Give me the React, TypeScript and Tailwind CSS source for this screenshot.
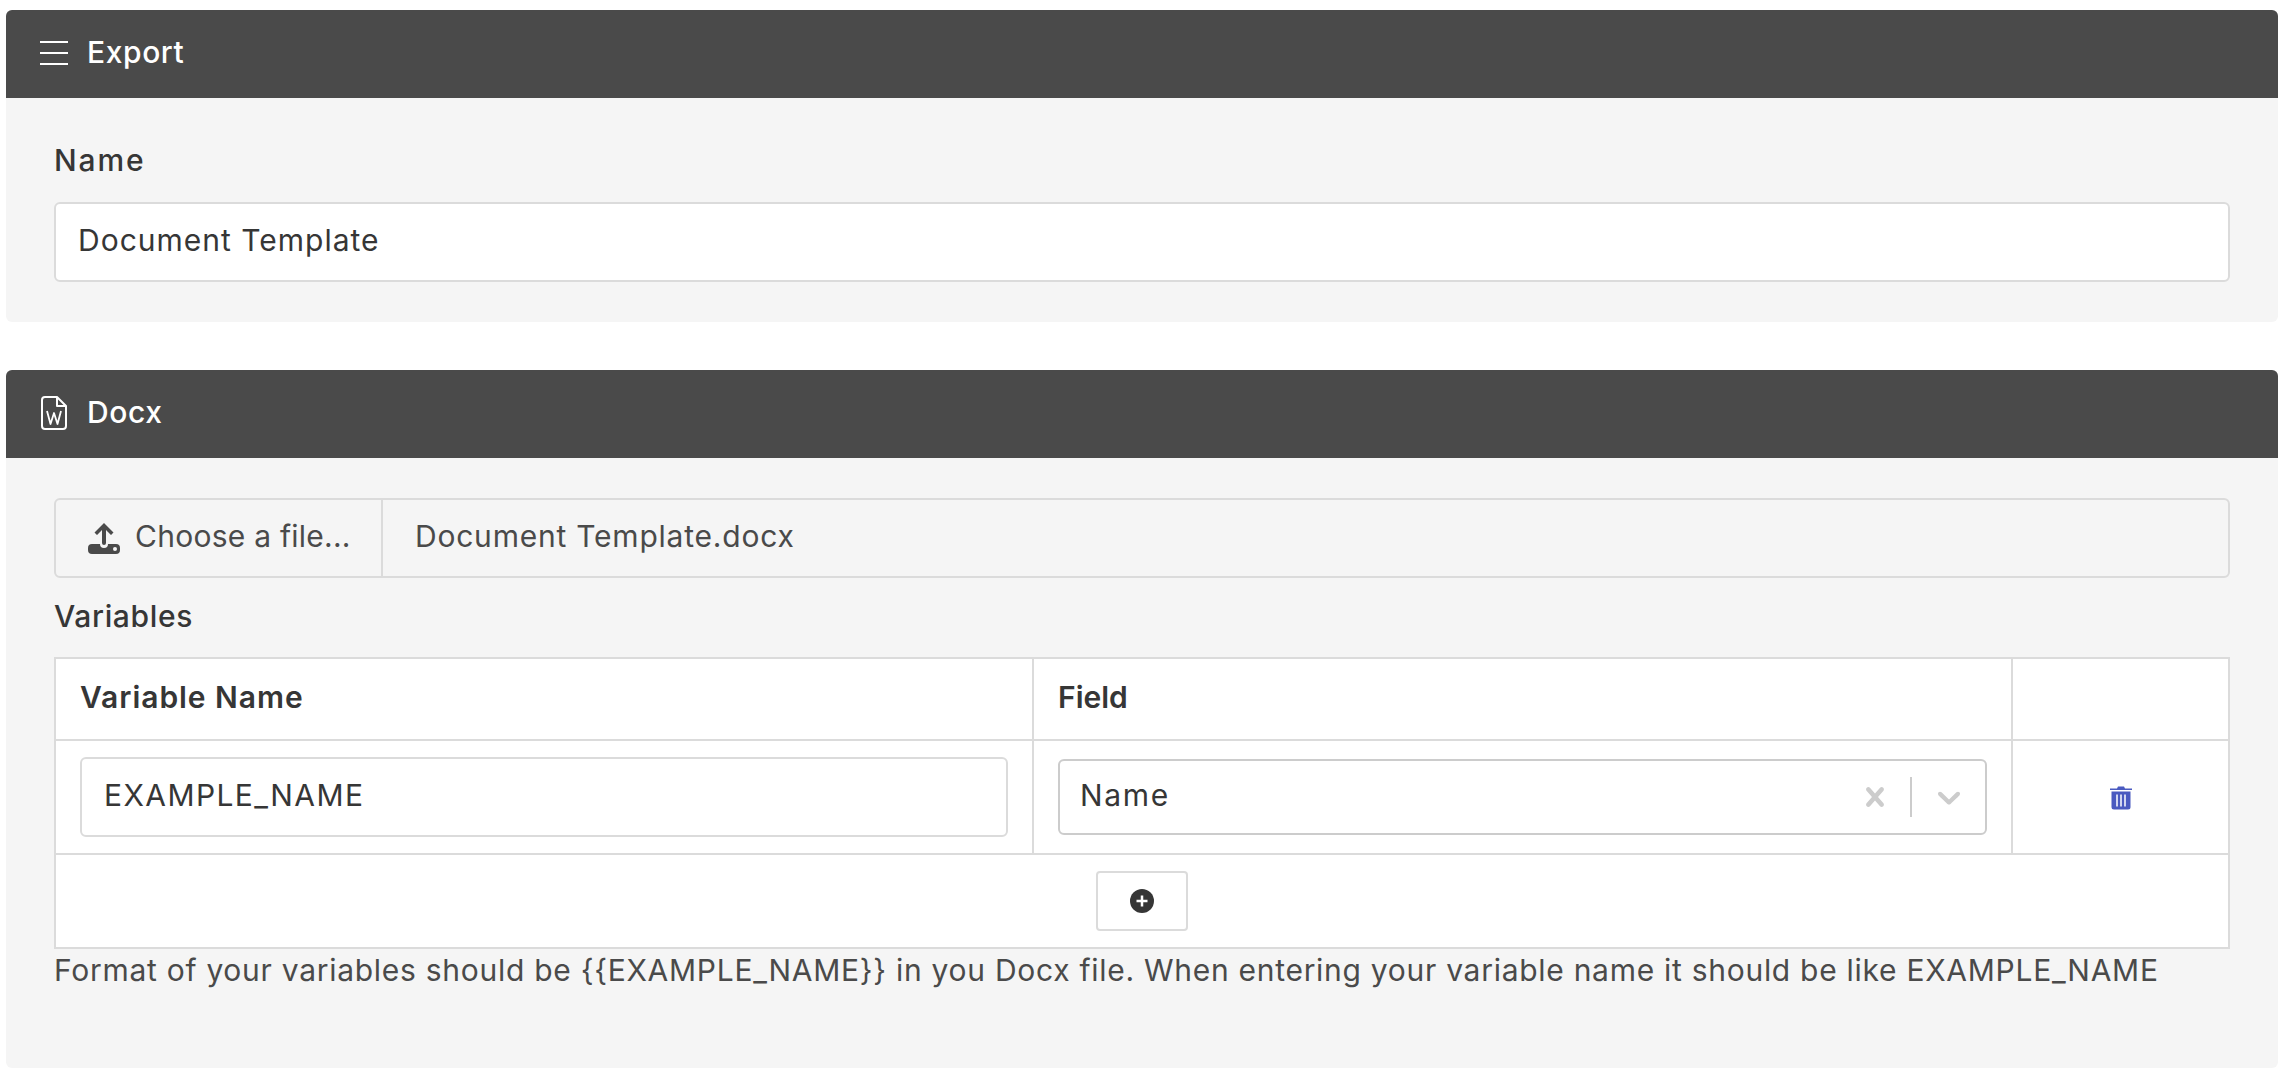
const font = "font-['Inter','Liberation_Sans',sans-serif]";

function MenuIcon() {
  return (
    <svg width="28" height="24" viewBox="0 0 28 24" className="shrink-0">
      <path d="M0 1h28M0 12h28M0 23h28" stroke="#fff" strokeWidth="2" fill="none" />
    </svg>
  );
}

function WordFileIcon() {
  return (
    <svg width="26" height="34" viewBox="0 0 26 34" fill="none" stroke="#fff" strokeWidth="2" className="shrink-0">
      <path d="M4 1h12l9 9v20a3 3 0 0 1-3 3H4a3 3 0 0 1-3-3V4a3 3 0 0 1 3-3z" strokeLinejoin="round" />
      <path d="M16 1v9h9" strokeLinejoin="round" />
      <path d="M6 15l3.500 13L13 17l3.500 11L20 15" strokeWidth="1.800" strokeLinejoin="round" />
    </svg>
  );
}

function UploadIcon() {
  return (
    <svg width="32" height="32" viewBox="0 0 32 32" className="shrink-0" fill="#4a4a4a">
      <path d="M16 1L6.500 10.500 9 13l5-5v13a2 2 0 0 0 4 0V8l5 5 2.500-2.500z" />
      <path d="M4 22h8a4 4 0 0 0 8 0h8a4 4 0 0 1 4 4v2a4 4 0 0 1-4 4H4a4 4 0 0 1-4-4v-2a4 4 0 0 1 4-4z" />
      <circle cx="27" cy="27" r="2" fill="#f5f5f5" />
    </svg>
  );
}

function TrashIcon() {
  return (
    <svg width="22" height="25" viewBox="0 0 22 25" fill="#4a5ac0">
      <path d="M0 5V3.500h7L8 1.500h6l1 2h7V5z" />
      <path d="M1.500 6.500h19V22a2.500 2.500 0 0 1-2.500 2.500H4A2.500 2.500 0 0 1 1.500 22z" />
      <path d="M7 9.500v12M11 9.500v12M15 9.500v12" stroke="#fff" strokeWidth="1.500" />
    </svg>
  );
}

function PlusCircleIcon() {
  return (
    <svg width="24" height="24" viewBox="0 0 24 24">
      <circle cx="12" cy="12" r="12" fill="#363636" />
      <path d="M12 6.500v11M6.500 12h11" stroke="#fff" strokeWidth="2.500" />
    </svg>
  );
}

function ClearIcon() {
  return (
    <svg width="38" height="38" viewBox="0 0 20 20" fill="#cccccc" className="shrink-0">
      <path d="M14.348 14.849c-0.469 0.469-1.229 0.469-1.697 0l-2.651-3.030-2.651 3.029c-0.469 0.469-1.229 0.469-1.697 0-0.469-0.469-0.469-1.229 0-1.697l2.758-3.150-2.759-3.152c-0.469-0.469-0.469-1.228 0-1.697s1.228-0.469 1.697 0l2.652 3.031 2.651-3.031c0.469-0.469 1.228-0.469 1.697 0s0.469 1.229 0 1.697l-2.758 3.152 2.758 3.150c0.469 0.469 0.469 1.229 0 1.698z" />
    </svg>
  );
}

function DropdownIcon() {
  return (
    <svg width="38" height="38" viewBox="0 0 20 20" fill="#cccccc" className="shrink-0">
      <path d="M4.516 7.548c0.436-0.446 1.043-0.481 1.576 0l3.908 3.747 3.908-3.747c0.533-0.481 1.141-0.446 1.574 0 0.436 0.445 0.408 1.197 0 1.615-0.406 0.418-4.695 4.502-4.695 4.502-0.217 0.223-0.502 0.335-0.787 0.335s-0.570-0.112-0.789-0.335c0 0-4.287-4.084-4.695-4.502s-0.436-1.170 0-1.615z" />
    </svg>
  );
}

function Card({ title, icon, children }: { title: string; icon: React.ReactNode; children: React.ReactNode }) {
  return (
    <section className="rounded-[6px] overflow-hidden bg-[#f5f5f5]">
      <header className="h-[88px] bg-[#4a4a4a] flex items-center pl-[34px] gap-[19px] text-white text-[30px] font-medium tracking-[0.6px] pb-[3px]">
        <span className="w-[28px] flex justify-center">{icon}</span>
        <span>{title}</span>
      </header>
      {children}
    </section>
  );
}

export default function App() {
  return (
    <div className={`${font} min-h-[1078px] bg-white pt-[10px] pl-[6px] pr-[8px] text-[#363636]`}>
      <Card title="Export" icon={<MenuIcon />}>
        <div className="px-[48px] pt-[42px] pb-[40px]">
          <label className="block text-[30px] font-medium leading-[40px] tracking-[1.9px] mb-[22px]">Name</label>
          <div className="h-[80px] bg-white border-2 border-[#dbdbdb] rounded-[6px] flex items-center px-[22px] pb-[3px] text-[30px] tracking-[1px]">
            Document Template
          </div>
        </div>
      </Card>

      <div className="mt-[48px]">
        <Card title="Docx" icon={<WordFileIcon />}>
          <div className="px-[48px] pt-[40px] h-[610px]">
            <div className="h-[80px] border-2 border-[#dbdbdb] rounded-[6px] flex items-center text-[30px] text-[#4a4a4a]">
              <div className="w-[327px] h-full flex items-center gap-[15px] pl-[32px] border-r-2 border-[#dbdbdb]">
                <UploadIcon />
                <span className="tracking-[0.25px] mb-[4px]">Choose a file...</span>
              </div>
              <div className="pl-[32px] mb-[4px] tracking-[0.78px]">Document Template.docx</div>
            </div>

            <div className="text-[30px] font-medium leading-[40px] tracking-[0.65px] mt-[18px] mb-[21px]">Variables</div>

            <table className="w-full table-fixed border-collapse bg-white text-[30px]">
              <colgroup>
                <col className="w-[978px]" />
                <col className="w-[979px]" />
                <col />
              </colgroup>
              <thead>
                <tr className="h-[82px]">
                  <th className="border-2 border-[#dbdbdb] text-left font-semibold text-[30px] tracking-[0.95px] pl-[24px] pb-[3px]">Variable Name</th>
                  <th className="border-2 border-[#dbdbdb] text-left font-semibold text-[30px] pl-[24px] pb-[3px]">Field</th>
                  <th className="border-2 border-[#dbdbdb]" />
                </tr>
              </thead>
              <tbody>
                <tr className="h-[114px]">
                  <td className="border-2 border-[#dbdbdb] px-[24px]">
                    <div className="h-[80px] border-2 border-[#dbdbdb] rounded-[6px] flex items-center px-[22px] pb-[3px] tracking-[1.4px]">
                      EXAMPLE_NAME
                    </div>
                  </td>
                  <td className="border-2 border-[#dbdbdb] px-[24px]">
                    <div className="h-[76px] border-2 border-[#cccccc] rounded-[6px] flex items-center pl-[20px] pr-[17px]">
                      <span className="flex-1 mb-[3px] tracking-[1.7px]">Name</span>
                      <ClearIcon />
                      <span className="w-[2px] h-[40px] bg-[#cccccc] ml-[16px] mr-[18px]" />
                      <DropdownIcon />
                    </div>
                  </td>
                  <td className="border-2 border-[#dbdbdb]">
                    <div className="flex justify-center items-center">
                      <TrashIcon />
                    </div>
                  </td>
                </tr>
                <tr className="h-[94px]">
                  <td colSpan={3} className="border-2 border-[#dbdbdb]">
                    <div className="flex justify-center">
                      <button className="w-[92px] h-[60px] border-2 border-[#dbdbdb] rounded-[4px] bg-white flex items-center justify-center">
                        <PlusCircleIcon />
                      </button>
                    </div>
                  </td>
                </tr>
              </tbody>
            </table>

            <p className="text-[30px] text-[#4a4a4a] leading-[40px] tracking-[0.72px] mt-[1px] whitespace-nowrap">
              Format of your variables should be {"{{EXAMPLE_NAME}}"} in you Docx file. When entering your variable name it should be like EXAMPLE_NAME
            </p>
          </div>
        </Card>
      </div>
    </div>
  );
}
